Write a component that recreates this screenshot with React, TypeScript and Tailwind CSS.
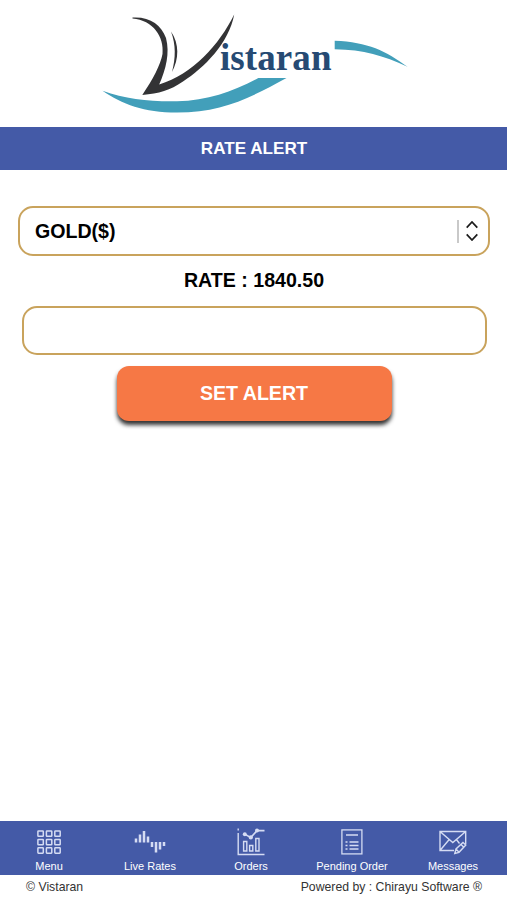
import type { ReactNode } from "react";

const Logo = () => {
  return (
    <svg viewBox="0 0 507 127" className="block h-[127px] w-full shrink-0">
      <g fill="#429fba">
        <path d="M102.5 90.7C126 99 150 101.8 177 101.3C208 100.5 234 91 258.3 78H286.5C250 98 222 112.5 177 112.5C144 112.5 122 104 102.5 90.7Z" />
        <path d="M334.7 40.7C368 42 386 51 407.5 66.8C383 55.5 364 49.8 334.7 49.3Z" />
      </g>
      <g fill="#333335">
        <path d="M132.5 17.5C150 16.5 161 24.5 166 38C170 53 166 69 159.2 84.5C193 74 219 45 234.2 14.5C229 43 204 68 183 81.5C170 90.5 159 93.5 142.3 95C153 79 160.5 65 162.5 54C164.5 37 153 20 132.5 18.5Z" />
        <path d="M171 31.5C179.5 44 179 59 172 72C175.7 58 176 45 171 31.5Z" />
      </g>
      <text
        x="220"
        y="70"
        textLength="111.5"
        fill="#264a73"
        className="font-['Liberation_Serif',serif] text-[37px] font-bold"
      >
        istaran
      </text>
    </svg>
  );
};

const MenuIcon = () => (
  <svg viewBox="0 0 24 24" className="h-6 w-6" fill="none" stroke="#d5dcf3" strokeWidth="1.5">
    {[0.9, 9.4, 17.8].map((y) =>
      [0.9, 9.4, 17.8].map((x) => (
        <rect key={`${x}-${y}`} x={x} y={y} width="5.4" height="5.4" rx="0.6" />
      ))
    )}
  </svg>
);

const LiveRatesIcon = () => (
  <svg viewBox="0 0 32 24" className="h-6 w-8" fill="none" stroke="#d5dcf3" strokeWidth="2.5">
    <path d="M2 8.5V12.5M6 4.5V12.5M10 1V12.5M14 6.5V12.5M18 12V17M22 12V22.5M26 12V19.5M30 12V16" />
  </svg>
);

const OrdersIcon = () => (
  <svg viewBox="0 0 28 28" className="h-7 w-7" fill="none" stroke="#d5dcf3" strokeWidth="1.4">
    <path d="M1.2 5V26.5H27.5M1.2 0.5V2.5" />
    <path d="M6.6 13.5H9.8V23H6.6ZM12.6 17.5H15.8V23H12.6ZM18.8 10.5H22V23H18.8Z" />
    <path d="M7.5 6L13.8 9.6L20 2.6H27.5" strokeWidth="1.6" />
    <g fill="#d5dcf3" stroke="none">
      <circle cx="7.8" cy="6.2" r="2" />
      <circle cx="13.8" cy="9.4" r="2.1" />
      <circle cx="20" cy="2.6" r="2" />
    </g>
  </svg>
);

const PendingIcon = () => (
  <svg viewBox="0 0 22 26" className="h-[26px] w-[22px]" fill="none" stroke="#d5dcf3" strokeWidth="1.3">
    <rect x="0.9" y="0.9" width="20" height="24" />
    <path d="M5 6H17M4.5 13H6.5M8.5 13H17.5M4.5 16.5H6.5M8.5 16.5H17.5M4.5 20H6.5M8.5 20H17.5" />
  </svg>
);

const MessagesIcon = () => (
  <svg viewBox="0 0 28 25" className="h-[25px] w-7" fill="none" stroke="#d5dcf3" strokeWidth="1.4">
    <path d="M15 20.5H1V1.5H26.7V14M1 1.5L13.8 12.5L26.7 1.5M1 20.5L9.8 10M17.8 10L20.5 13.5" />
    <path d="M15.8 23.5L17 19L24 12.5L26.8 15L20 22.3ZM17 19L20 22.3M22 14.5L24.8 17.2" />
  </svg>
);

const NavItem = ({ label, children }: { label: string; children: ReactNode }) => {
  return (
    <a href="#" className="flex w-[101px] flex-col items-center text-[11px] leading-[15px] text-white">
      <span className="flex h-[38px] items-center justify-center pt-1">{children}</span>
      <span className="whitespace-nowrap">{label}</span>
    </a>
  );
};

const App = () => {
  return (
    <div className="flex h-[900px] w-full flex-col overflow-hidden bg-white font-['Liberation_Sans',Arial,sans-serif]">
      <Logo />

      <h1 className="flex h-[43px] shrink-0 items-center justify-center bg-[#445aa7] pl-px text-[17.1px] font-bold text-white">
        RATE ALERT
      </h1>

      <main className="flex flex-1 flex-col items-center pt-9 text-[19.6px] font-bold text-black">
        <button className="ml-px flex h-[50px] w-[472px] items-center justify-between rounded-[15px] border-2 border-[#c9a35c] pr-[10px] pl-[15px]">
          <span className="pt-px">GOLD($)</span>
          <span className="flex items-center gap-[7px]">
            <span className="h-[23px] w-[2px] bg-[#c9c9c9]" />
            <svg viewBox="0 0 12 20" className="h-5 w-3" fill="none" stroke="#1b1b1b" strokeWidth="1.7">
              <path d="M0.7 6.7L6 1L11.3 6.7M0.7 13.3L6 19L11.3 13.3" />
            </svg>
          </span>
        </button>
        <p className="flex h-[50px] items-center pl-px">RATE : 1840.50</p>
        <input className="ml-[2px] h-[49px] w-[465px] rounded-[15px] border-2 border-[#c9a35c] px-4" />
        <button className="mt-[11px] ml-[2px] h-[55px] w-[275px] rounded-xl bg-[#f67845] pt-px pr-px text-white shadow-[0_4px_4px_#333]">
          SET ALERT
        </button>
      </main>

      <nav className="h-[54px] shrink-0 bg-[#445aa7]">
        <div className="-ml-[1.5px] flex">
          <NavItem label="Menu">
            <MenuIcon />
          </NavItem>
          <NavItem label="Live Rates">
            <LiveRatesIcon />
          </NavItem>
          <NavItem label="Orders">
            <OrdersIcon />
          </NavItem>
          <NavItem label="Pending Order">
            <PendingIcon />
          </NavItem>
          <NavItem label="Messages">
            <MessagesIcon />
          </NavItem>
        </div>
      </nav>

      <footer className="flex h-[25px] shrink-0 justify-between pr-[25px] pl-[26px] text-[12.25px] leading-[24px] text-[#333]">
        <span>© Vistaran</span>
        <span>Powered by : Chirayu Software ®</span>
      </footer>
    </div>
  );
};

export default App;
